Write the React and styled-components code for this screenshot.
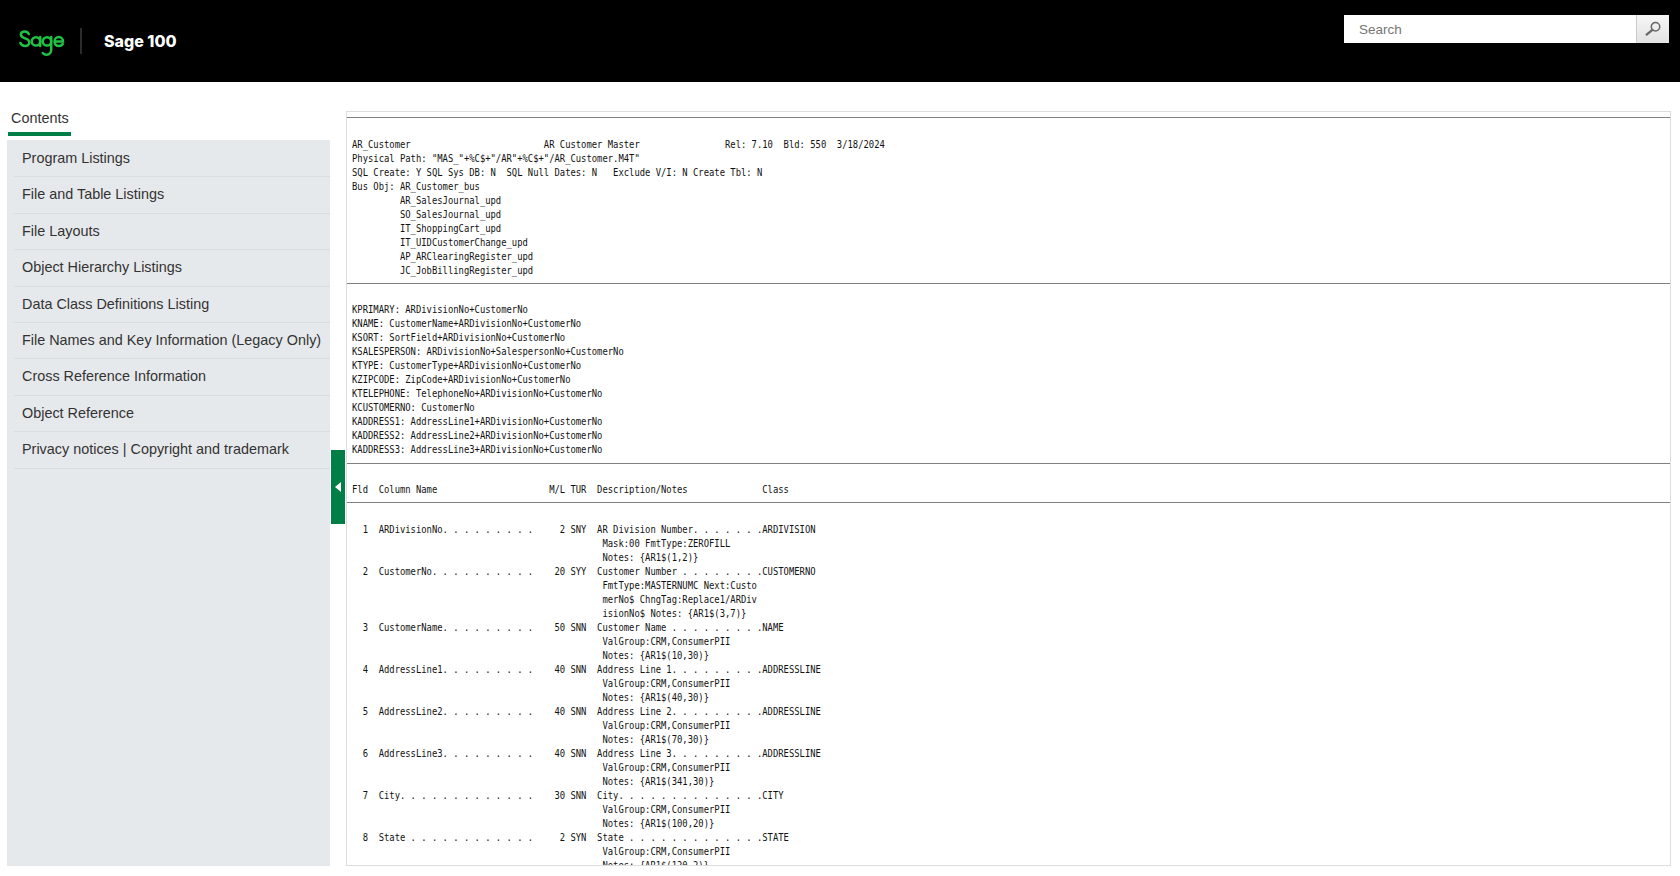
import React from "react";
import styled, { createGlobalStyle } from "styled-components";

const Global = createGlobalStyle`
  html, body { margin: 0; padding: 0; height: 100%; background: #fff; overflow: hidden; }
  body { font-family: "Liberation Sans", Arial, sans-serif; }
  #root { height: 100%; }
`;

const Page = styled.div`
  display: flex;
  flex-direction: column;
  height: 876px;
`;

const Header = styled.header`
  flex: 0 0 82px;
  background: #000;
  display: flex;
  justify-content: space-between;
  align-items: flex-start;
  padding-right: 11px;
`;

const Brand = styled.div`
  display: flex;
  align-items: center;
  height: 82px;
  padding-left: 19px;
`;

const Logo = styled.svg`
  flex: none;
  width: 46px;
  height: 28px;
  margin-top: 3px;
`;

const BrandRule = styled.span`
  width: 2px;
  height: 26px;
  margin: 0 22px 0 15px;
  background: #2b2b2b;
`;

const Product = styled.span`
  font-family: "Inter", sans-serif;
  font-weight: 800;
  font-size: 16px;
  color: #fff;
`;

const Search = styled.form`
  display: flex;
  width: 325px;
  height: 28px;
  margin-top: 15px;
  background: #fff;
`;

const SearchInput = styled.input`
  flex: 1;
  min-width: 0;
  border: 0;
  padding: 0 0 0 15px;
  font: 13.5px "Liberation Sans", Arial, sans-serif;
  outline: none;
  &::placeholder { color: #757575; opacity: 1; }
`;

const SearchButton = styled.button`
  flex: 0 0 33px;
  border: 0;
  border-left: 1px solid #ccc;
  padding: 0;
  display: flex;
  align-items: center;
  justify-content: center;
  background: linear-gradient(#f6f6f6, #e2e2e2);
`;

const Main = styled.div`
  flex: 1;
  min-height: 0;
  display: flex;
  padding: 29px 9px 10px 7px;
`;

const Sidebar = styled.aside`
  flex: 0 0 323px;
  display: flex;
  flex-direction: column;
`;

const TabBar = styled.div`
  display: flex;
  padding-left: 1px;
`;

const Tab = styled.div`
  padding: 0 3px;
  height: 21px;
  line-height: 15px;
  font-size: 14.4px;
  color: #333;
  border-bottom: 4px solid #007e45;
  width: 57px;
`;

const Nav = styled.nav`
  flex: 1;
  margin-top: 4px;
  background: #e6e9eb;
  padding: 1px 0 0 7px;
`;

const NavItem = styled.a`
  display: block;
  height: 36.4px;
  box-sizing: border-box;
  padding: 7px 0 0 8px;
  line-height: 20px;
  font-size: 14.4px;
  white-space: nowrap;
  color: #333;
  border-bottom: 1px solid #d9dddf;
`;

const Toggle = styled.button`
  flex: 0 0 14px;
  width: 14px;
  height: 74px;
  margin: 339px 1px 0 1px;
  padding: 0;
  border: 0;
  background: #007e45;
  display: flex;
  align-items: center;
  justify-content: center;
`;

const Arrow = styled.span`
  width: 0;
  height: 0;
  border-style: solid;
  border-width: 5px 6px 5px 0;
  border-color: transparent #fff transparent transparent;
`;

const Content = styled.main`
  flex: 1;
  min-width: 0;
  border: 1px solid #ddd;
  overflow: hidden;
  padding-top: 5px;
`;

const Rule = styled.hr`
  margin: ${p => p.$top || 0}px 0 0;
  border: 0;
  border-top: 1px solid #808080;
`;

const Listing = styled.pre`
  margin: ${p => p.$top || 0}px 0 0;
  padding: 0 0 0 5px;
  font-family: "DejaVu Sans Mono", monospace;
  font-size: 10px;
  line-height: 14px;
  color: #111;
  transform: scaleX(0.885);
  transform-origin: 5px 0;
`;

const navItems = [
  "Program Listings",
  "File and Table Listings",
  "File Layouts",
  "Object Hierarchy Listings",
  "Data Class Definitions Listing",
  "File Names and Key Information (Legacy Only)",
  "Cross Reference Information",
  "Object Reference",
  "Privacy notices | Copyright and trademark",
];

const head = `AR_Customer                         AR Customer Master                Rel: 7.10  Bld: 550  3/18/2024
Physical Path: "MAS_"+%C$+"/AR"+%C$+"/AR_Customer.M4T"
SQL Create: Y SQL Sys DB: N  SQL Null Dates: N   Exclude V/I: N Create Tbl: N
Bus Obj: AR_Customer_bus
         AR_SalesJournal_upd
         SO_SalesJournal_upd
         IT_ShoppingCart_upd
         IT_UIDCustomerChange_upd
         AP_ARClearingRegister_upd
         JC_JobBillingRegister_upd`;

const keys = `KPRIMARY: ARDivisionNo+CustomerNo
KNAME: CustomerName+ARDivisionNo+CustomerNo
KSORT: SortField+ARDivisionNo+CustomerNo
KSALESPERSON: ARDivisionNo+SalespersonNo+CustomerNo
KTYPE: CustomerType+ARDivisionNo+CustomerNo
KZIPCODE: ZipCode+ARDivisionNo+CustomerNo
KTELEPHONE: TelephoneNo+ARDivisionNo+CustomerNo
KCUSTOMERNO: CustomerNo
KADDRESS1: AddressLine1+ARDivisionNo+CustomerNo
KADDRESS2: AddressLine2+ARDivisionNo+CustomerNo
KADDRESS3: AddressLine3+ARDivisionNo+CustomerNo`;

const columns = `Fld  Column Name                     M/L TUR  Description/Notes              Class`;

const note = " ".repeat(47);
const fields = `  1  ARDivisionNo. . . . . . . . .     2 SNY  AR Division Number. . . . . . .ARDIVISION
${note}Mask:00 FmtType:ZEROFILL
${note}Notes: {AR1$(1,2)}
  2  CustomerNo. . . . . . . . . .    20 SYY  Customer Number . . . . . . . .CUSTOMERNO
${note}FmtType:MASTERNUMC Next:Custo
${note}merNo$ ChngTag:Replace1/ARDiv
${note}isionNo$ Notes: {AR1$(3,7)}
  3  CustomerName. . . . . . . . .    50 SNN  Customer Name . . . . . . . . .NAME
${note}ValGroup:CRM,ConsumerPII
${note}Notes: {AR1$(10,30)}
  4  AddressLine1. . . . . . . . .    40 SNN  Address Line 1. . . . . . . . .ADDRESSLINE
${note}ValGroup:CRM,ConsumerPII
${note}Notes: {AR1$(40,30)}
  5  AddressLine2. . . . . . . . .    40 SNN  Address Line 2. . . . . . . . .ADDRESSLINE
${note}ValGroup:CRM,ConsumerPII
${note}Notes: {AR1$(70,30)}
  6  AddressLine3. . . . . . . . .    40 SNN  Address Line 3. . . . . . . . .ADDRESSLINE
${note}ValGroup:CRM,ConsumerPII
${note}Notes: {AR1$(341,30)}
  7  City. . . . . . . . . . . . .    30 SNN  City. . . . . . . . . . . . . .CITY
${note}ValGroup:CRM,ConsumerPII
${note}Notes: {AR1$(100,20)}
  8  State . . . . . . . . . . . .     2 SYN  State . . . . . . . . . . . . .STATE
${note}ValGroup:CRM,ConsumerPII
${note}Notes: {AR1$(120,2)}`;

export default function App() {
  return (
    <Page>
      <Global />
      <Header>
        <Brand>
          <Logo viewBox="0 0 46 28" fill="none" stroke="#1fc245" strokeWidth="2.5" strokeLinecap="round" role="img" aria-label="Sage logo">
            <path d="M9.8 5C9 3.2 7.5 2.4 5.8 2.4 3.5 2.4 1.9 3.8 1.9 5.8 1.9 10.3 10.4 8.5 10.4 13.2 10.4 15.5 8.4 16.9 6 16.9 3.9 16.9 2.2 15.8 1.4 14" />
            <circle cx="17" cy="12.4" r="4.2" />
            <path d="M21.2 8V17" />
            <circle cx="28" cy="12.4" r="4.2" />
            <path d="M32.2 8V20.5C32.2 23.6 30.4 25.8 27.6 25.8 26 25.8 24.7 25.1 23.8 24" />
            <path d="M35.8 12.5H44C44 9.8 42.2 8 39.9 8 37.4 8 35.6 10 35.6 12.5 35.6 15.2 37.4 17 40 17 41.6 17 42.9 16.3 43.8 15" />
          </Logo>
          <BrandRule />
          <Product>Sage 100</Product>
        </Brand>
        <Search onSubmit={e => e.preventDefault()}>
          <SearchInput placeholder="Search" />
          <SearchButton type="button" aria-label="Search">
            <svg width="16" height="16" viewBox="0 0 16 16" fill="none">
              <circle cx="10.5" cy="5.7" r="4.2" stroke="#666" strokeWidth="1.5" />
              <path d="M7.4 8.8 1.6 13.6" stroke="#666" strokeWidth="2.2" strokeLinecap="round" />
            </svg>
          </SearchButton>
        </Search>
      </Header>
      <Main>
        <Sidebar>
          <TabBar><Tab>Contents</Tab></TabBar>
          <Nav>
            {navItems.map(item => <NavItem key={item}>{item}</NavItem>)}
          </Nav>
        </Sidebar>
        <Toggle type="button" aria-label="Collapse"><Arrow /></Toggle>
        <Content>
          <Rule />
          <Listing $top={20}>{head}</Listing>
          <Rule $top={5} />
          <Listing $top={19}>{keys}</Listing>
          <Rule $top={6} />
          <Listing $top={19}>{columns}</Listing>
          <Rule $top={5} />
          <Listing $top={20}>{fields}</Listing>
        </Content>
      </Main>
    </Page>
  );
}
